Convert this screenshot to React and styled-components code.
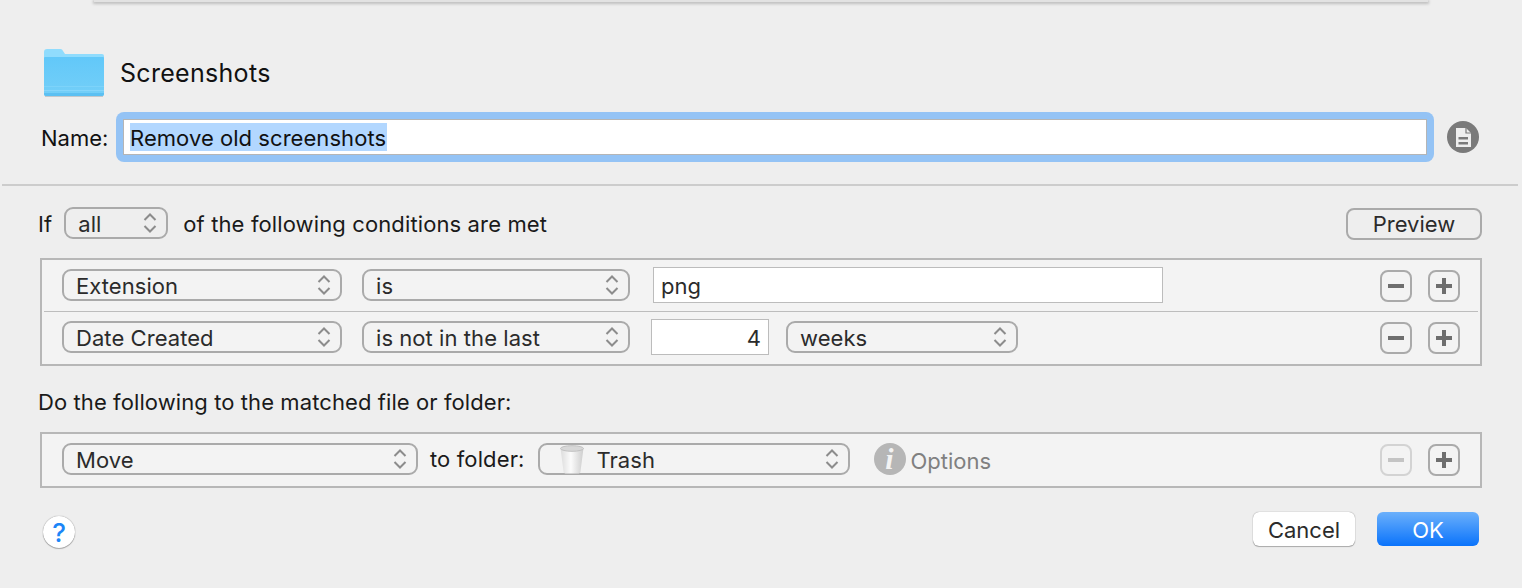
import React from "react";
import styled, { createGlobalStyle } from "styled-components";

const Global = createGlobalStyle`
  html, body { margin: 0; padding: 0; background: #eeeeee; }
  * { box-sizing: border-box; }
`;

const Page = styled.div`
  width: 1522px;
  height: 588px;
  overflow: hidden;
  background: #eeeeee;
  color: #1a1a1a;
  font-family: Inter, "Liberation Sans", sans-serif;
  font-size: 22px;
`;

const SheetEdge = styled.div`
  height: 2px;
  margin: 0 94px;
  background: #e2e2e2;
  box-shadow: 0 1px 3px 1px rgba(0, 0, 0, 0.2);
`;

const Header = styled.div`
  display: flex;
  align-items: center;
  gap: 15px;
  height: 47px;
  margin-top: 47px;
  padding-left: 44px;
`;

const Title = styled.div`
  font-size: 25px;
  letter-spacing: 0.3px;
  color: #111;
`;

const NameRow = styled.div`
  display: flex;
  align-items: center;
  margin-top: 16px;
  padding-left: 41px;
`;

const NameLabel = styled.div`
  width: 75px;
  padding-top: 2px;
  color: #111;
`;

const FocusField = styled.div`
  width: 1318px;
  height: 50px;
  padding: 7px;
  border-radius: 8px;
  background: #94c3f5;
`;

const FieldInner = styled.div`
  display: flex;
  align-items: center;
  height: 100%;
  padding-left: 6px;
  background: #fff;
  border: 1px solid #b5b5b5;
`;

const Selected = styled.span`
  display: block;
  height: 28px;
  padding: 1px 1px 0 0;
  line-height: 28px;
  letter-spacing: 0.05px;
  background: #b2d7ff;
  color: #111;
`;

const DocButton = styled.div`
  display: flex;
  margin-left: 13px;
`;

const Divider = styled.div`
  height: 2px;
  margin: 22px 4px 0 2px;
  background: #cccccc;
`;

const IfRow = styled.div`
  display: flex;
  align-items: center;
  height: 32px;
  margin-top: 22px;
  padding: 0 40px 0 38px;
`;

const Word = styled.span`
  color: #1a1a1a;
  letter-spacing: 0.12px;
  margin: ${(p) => p.$margin || "0"};
`;

const PlainButton = styled.div`
  display: flex;
  align-items: center;
  justify-content: center;
  width: 136px;
  height: 32px;
  margin-left: auto;
  border: 2px solid #aaaaaa;
  border-radius: 8px;
  color: #2b2b2b;
`;

const Panel = styled.div`
  margin: ${(p) => p.$top}px 40px 0;
  background: #f3f3f3;
  border: 2px solid #b7b7b7;
`;

const Row = styled.div`
  display: flex;
  align-items: center;
  height: ${(p) => p.$h}px;
  padding: 0 20px ${(p) => p.$h - 50}px;
`;

const RowLine = styled.div`
  height: 1px;
  margin: 0 2px;
  background: #bdbdbd;
`;

const SelectBox = styled.div`
  display: flex;
  align-items: center;
  flex: none;
  width: ${(p) => p.$w}px;
  height: 32px;
  margin: ${(p) => p.$margin || "0"};
  padding: 0 8px 0 12px;
  border: 2px solid #aaaaaa;
  border-radius: 9px;
  color: #2b2b2b;
`;

const SelectText = styled.span`
  flex: 1;
  padding-top: 2px;
  letter-spacing: 0.06px;
  margin-left: ${(p) => p.$left || 0}px;
`;

const TextBox = styled.div`
  display: flex;
  align-items: center;
  justify-content: ${(p) => (p.$right ? "flex-end" : "flex-start")};
  flex: none;
  width: ${(p) => p.$w}px;
  height: 36px;
  margin-left: ${(p) => p.$left}px;
  padding: 2px 7px 0;
  background: #fff;
  border: 1px solid #bcbcbc;
  color: #2b2b2b;
`;

const Steppers = styled.div`
  display: flex;
  gap: 16px;
  margin: 2px 0 0 auto;
`;

const SquareButton = styled.div`
  display: flex;
  align-items: center;
  justify-content: center;
  width: 32px;
  height: 32px;
  border: 2px solid ${(p) => (p.$off ? "#d3d3d3" : "#aaaaaa")};
  border-radius: 8px;
`;

const SectionLabel = styled.div`
  height: 28px;
  line-height: 28px;
  margin-top: 22px;
  padding-left: 38px;
  letter-spacing: 0.09px;
  color: #1a1a1a;
`;

const InfoBadge = styled.div`
  display: flex;
  align-items: center;
  justify-content: center;
  flex: none;
  width: 32px;
  height: 32px;
  margin-left: 24px;
  border-radius: 50%;
  background: #b6b6b6;
  color: #f3f3f3;
  font-family: "Liberation Serif", serif;
  font-style: italic;
  font-weight: 700;
  font-size: 30px;
`;

const Dimmed = styled.span`
  margin-left: 5px;
  padding-top: 4px;
  color: #808080;
`;

const Footer = styled.div`
  display: flex;
  align-items: center;
  height: 34px;
  margin-top: 24px;
  padding: 0 43px;
`;

const Help = styled.div`
  display: flex;
  align-items: center;
  justify-content: center;
  width: 32px;
  height: 32px;
  margin-top: 6px;
  border-radius: 50%;
  background: #fff;
  box-shadow: 0 0 1px rgba(0, 0, 0, 0.5), 0 1px 1px rgba(0, 0, 0, 0.25);
  color: #1c86f7;
  font-size: 26px;
  font-weight: 500;
`;

const CancelButton = styled.div`
  display: flex;
  align-items: center;
  justify-content: center;
  width: 102px;
  height: 34px;
  margin-left: auto;
  padding-top: 2px;
  border-radius: 6px;
  background: #fff;
  box-shadow: 0 0 1px rgba(0, 0, 0, 0.5), 0 1px 1px rgba(0, 0, 0, 0.25);
  color: #2b2b2b;
`;

const OkButton = styled.div`
  display: flex;
  align-items: center;
  justify-content: center;
  width: 102px;
  height: 34px;
  margin-left: 22px;
  padding-top: 2px;
  border-radius: 6px;
  background: linear-gradient(#6bb0fb, #0a73fb);
  color: #fff;
`;

const Updown = () => (
  <svg width="16" height="22" viewBox="0 0 16 22" fill="none" stroke="#8c8c8c" strokeWidth="2">
    <path d="M2.5 8 L8 2.5 L13.5 8" />
    <path d="M2.5 14 L8 19.5 L13.5 14" />
  </svg>
);

const Select = ({ w, margin, left, icon, children }) => (
  <SelectBox $w={w} $margin={margin}>
    {icon}
    <SelectText $left={left}>{children}</SelectText>
    <Updown />
  </SelectBox>
);

const Minus = ({ color = "#6e6e6e" }) => (
  <svg width="16" height="16" viewBox="0 0 16 16">
    <rect x="0" y="6" width="16" height="4" fill={color} />
  </svg>
);

const Plus = () => (
  <svg width="16" height="16" viewBox="0 0 16 16" fill="#6e6e6e">
    <rect x="0" y="6" width="16" height="4" />
    <rect x="6" y="0" width="4" height="16" />
  </svg>
);

const Folder = () => (
  <svg width="61" height="48" viewBox="0 0 61 48">
    <defs>
      <linearGradient id="folderFront" x1="0" y1="0" x2="0" y2="1">
        <stop offset="0" stopColor="#62c8f9" />
        <stop offset="1" stopColor="#74cff8" />
      </linearGradient>
    </defs>
    <path d="M0 3 a3 3 0 0 1 3-3 h13 a3 3 0 0 1 3 2 l2 3 h37 a2 2 0 0 1 2 2 v8 H0z" fill="#90dcfd" />
    <path d="M0 9 a1 1 0 0 1 1-1 h58 a1 1 0 0 1 1 1 v36 a2 2 0 0 1-2 2 H2 a2 2 0 0 1-2-2z" fill="url(#folderFront)" />
    <rect x="0" y="37" width="60" height="1" fill="#7dd3fa" />
    <rect x="0" y="41" width="60" height="1" fill="#86d6fb" />
    <path d="M0 44 h60 v1 a2 2 0 0 1-2 2 H2 a2 2 0 0 1-2-2z" fill="#5cc0f2" />
    <rect x="1" y="47" width="58" height="1" fill="#c2c8cc" />
  </svg>
);

const DocIcon = () => (
  <svg width="32" height="32" viewBox="0 0 32 32">
    <circle cx="16" cy="16" r="16" fill="#7a7a7a" />
    <path d="M9 7 H19 L24 12 V26 H9 Z" fill="#eeeeee" />
    <path d="M19 7 V12 H24" fill="none" stroke="#7a7a7a" strokeWidth="1.2" />
    <rect x="11.5" y="16" width="9.5" height="2.5" fill="#7a7a7a" />
    <rect x="11.5" y="21" width="9.5" height="2.5" fill="#7a7a7a" />
  </svg>
);

const TrashIcon = () => (
  <svg width="24" height="29" viewBox="0 0 24 29" style={{ flex: "none", marginLeft: 8 }}>
    <defs>
      <linearGradient id="can" x1="0" y1="0" x2="1" y2="0">
        <stop offset="0" stopColor="#dcdcdc" />
        <stop offset="0.45" stopColor="#fbfbfb" />
        <stop offset="1" stopColor="#cdcdcd" />
      </linearGradient>
    </defs>
    <path d="M0.5 3 H23.5 L20.5 26.5 a3 2 0 0 1-3 2 H6.5 a3 2 0 0 1-3-2 Z" fill="url(#can)" />
    <ellipse cx="12" cy="3.5" rx="11.5" ry="2.8" fill="#d8d8d8" stroke="#c0c0c0" />
  </svg>
);

export default function App() {
  return (
    <Page>
      <Global />
      <SheetEdge />
      <Header>
        <Folder />
        <Title>Screenshots</Title>
      </Header>
      <NameRow>
        <NameLabel>Name:</NameLabel>
        <FocusField>
          <FieldInner>
            <Selected>Remove old screenshots</Selected>
          </FieldInner>
        </FocusField>
        <DocButton>
          <DocIcon />
        </DocButton>
      </NameRow>
      <Divider />
      <IfRow>
        <Word>If</Word>
        <Select w={104} margin="0 0 2px 12px">all</Select>
        <Word $margin="0 0 0 15px">of the following conditions are met</Word>
        <PlainButton>Preview</PlainButton>
      </IfRow>
      <Panel $top={18}>
        <Row $h={51}>
          <Select w={280}>Extension</Select>
          <Select w={268} margin="0 0 0 20px">is</Select>
          <TextBox $w={510} $left={23}>png</TextBox>
          <Steppers>
            <SquareButton><Minus /></SquareButton>
            <SquareButton><Plus /></SquareButton>
          </Steppers>
        </Row>
        <RowLine />
        <Row $h={52}>
          <Select w={280}>Date Created</Select>
          <Select w={268} margin="0 0 0 20px">is not in the last</Select>
          <TextBox $w={118} $left={21} $right>4</TextBox>
          <Select w={232} margin="0 0 0 17px">weeks</Select>
          <Steppers>
            <SquareButton><Minus /></SquareButton>
            <SquareButton><Plus /></SquareButton>
          </Steppers>
        </Row>
      </Panel>
      <SectionLabel>Do the following to the matched file or folder:</SectionLabel>
      <Panel $top={16}>
        <Row $h={52}>
          <Select w={356}>Move</Select>
          <Word $margin="0 13px 0 12px">to folder:</Word>
          <Select w={312} left={13} icon={<TrashIcon />}>Trash</Select>
          <InfoBadge>i</InfoBadge>
          <Dimmed>Options</Dimmed>
          <Steppers>
            <SquareButton $off><Minus color="#c4c4c4" /></SquareButton>
            <SquareButton><Plus /></SquareButton>
          </Steppers>
        </Row>
      </Panel>
      <Footer>
        <Help>?</Help>
        <CancelButton>Cancel</CancelButton>
        <OkButton>OK</OkButton>
      </Footer>
    </Page>
  );
}
